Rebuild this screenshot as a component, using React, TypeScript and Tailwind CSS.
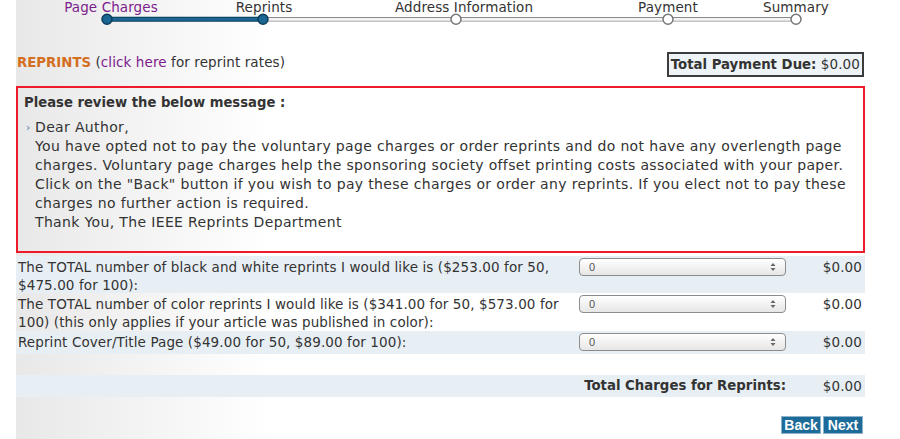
import React from "react";

const steps = [
  { label: "Page Charges", x: 111, node: 107, done: true },
  { label: "Reprints", x: 264, node: 263, done: true },
  { label: "Address Information", x: 464, node: 456, done: false },
  { label: "Payment", x: 668, node: 668, done: false },
  { label: "Summary", x: 796, node: 796, done: false },
];

const Stepper: React.FC = () => (
  <div className="relative h-[26px] w-[900px]">
    {steps.map((s) => (
      <span
        key={s.label}
        className={`absolute top-0 -translate-x-1/2 whitespace-nowrap leading-[14px] ${s.label === "Page Charges" ? "text-[#7d1d8c]" : "text-[#333]"}`}
        style={{ left: s.x }}
      >
        {s.label}
      </span>
    ))}
    <svg className="absolute left-0 top-0" width="900" height="26">
      <line x1="263" y1="17.5" x2="796" y2="17.5" stroke="#8a8a8a" strokeWidth="1" />
      <line x1="263" y1="21" x2="796" y2="21" stroke="#8a8a8a" strokeWidth="1" />
      <line x1="263" y1="19.25" x2="796" y2="19.25" stroke="#f4f4f4" strokeWidth="2.5" />
      <line x1="107" y1="19.25" x2="263" y2="19.25" stroke="#0b3d5a" strokeWidth="5" />
      <line x1="107" y1="19.25" x2="263" y2="19.25" stroke="#1a6793" strokeWidth="3" />
      {steps.map((s) =>
        s.done ? (
          <circle key={s.label} cx={s.node} cy="19.25" r="5" fill="#1a6793" stroke="#0b3d5a" strokeWidth="1.5" />
        ) : (
          <circle key={s.label} cx={s.node} cy="19.25" r="5" fill="#ffffff" stroke="#777" strokeWidth="1.5" />
        )
      )}
    </svg>
  </div>
);

const Select: React.FC = () => (
  <div className="flex h-[18px] w-[207px] shrink-0 items-center justify-between rounded-[4px] border border-[#8c8c8c] bg-[linear-gradient(to_bottom,#ffffff,#e6e6e6)] pl-[9px] pr-[9px] text-[11px] text-[#555] shadow-[inset_0_1px_0_#fff]">
    <span style={{ fontFamily: '"Liberation Sans", Arial, sans-serif' }}>0</span>
    <svg width="6" height="10" viewBox="0 0 6 10">
      <path d="M0.5 4 L3 1 L5.5 4 Z" fill="#666" />
      <path d="M0.5 6 L3 9 L5.5 6 Z" fill="#666" />
    </svg>
  </div>
);

const rows = [
  {
    label: "The TOTAL number of black and white reprints I would like is ($253.00 for 50, $475.00 for 100):",
    shade: true,
    cls: "h-[37px]",
  },
  {
    label: "The TOTAL number of color reprints I would like is ($341.00 for 50, $573.00 for 100) (this only applies if your article was published in color):",
    shade: false,
    cls: "h-[38px]",
  },
  {
    label: "Reprint Cover/Title Page ($49.00 for 50, $89.00 for 100):",
    shade: true,
    cls: "h-[23px]",
  },
];

export default function App() {
  return (
    <div
      className="min-h-[439px] w-[900px] bg-white text-[13.5px] tracking-[0.1px] text-[#333]"
      style={{ fontFamily: '"DejaVu Sans", Verdana, sans-serif' }}
    >
      <div className="ml-[16px] w-[849px] bg-[linear-gradient(to_right,#e8e8e8,#ffffff_30%)] pb-[6px]">
        <div className="-ml-[16px]">
          <Stepper />
        </div>

        <div className="mt-[26px] flex items-start justify-between">
          <div className="mt-[1px] pl-[1px] leading-[18px]">
            <span className="text-[13.3px] font-bold tracking-normal text-[#d46f1f]">REPRINTS</span>{" "}
            (<span className="text-[#7d1d8c]">click here</span> for reprint rates)
          </div>
          <div className="mr-[1px] h-[25px] whitespace-nowrap border-2 border-[#3c3c3c] bg-[#eef3f7] px-[2px] leading-[21px]">
            <span className="text-[13.3px] font-bold tracking-normal">Total Payment Due:</span> $0.00
          </div>
        </div>

        <div className="mt-[9px] h-[167px] border-2 border-[#ee1c2a] pl-[6px] pr-[10px] pt-[6px]">
          <div className="text-[13.2px] font-bold leading-[18px] tracking-normal">Please review the below message :</div>
          <div className="mt-[6px] flex text-[14px] leading-[19px] tracking-[0.35px]">
            <span className="w-[11px] shrink-0 pl-[2px] text-[11px] text-[#5a7fa0]">›</span>
            <div>
              Dear Author,
              <br />
              You have opted not to pay the voluntary page charges or order reprints and do not have any overlength page charges. Voluntary page charges help the sponsoring society offset printing costs associated with your paper. Click on the "Back" button if you wish to pay these charges or order any reprints. If you elect not to pay these charges no further action is required.
              <br />
              Thank You, The IEEE Reprints Department
            </div>
          </div>
        </div>

        <div className="mt-[3px]">
          {rows.map((r) => (
            <div key={r.label} className={`flex items-start pt-[2px] ${r.cls} ${r.shade ? "bg-[#e8eff4]" : ""}`}>
              <div className="w-[563px] pl-[2px] leading-[18px]">{r.label}</div>
              <Select />
              <div className="flex-1 pr-[3px] text-right leading-[18px]">$0.00</div>
            </div>
          ))}
          <div className="h-[21px]" />
          <div className="flex h-[22px] items-center bg-[#e8eff4]">
            <div className="w-[770px] text-right text-[13.3px] font-bold tracking-normal">Total Charges for Reprints:</div>
            <div className="flex-1 pr-[3px] text-right">$0.00</div>
          </div>
        </div>

        <div
          className="mt-[20px] flex justify-end gap-[4px] pr-[3px] text-[14px] font-bold tracking-normal text-white"
          style={{ fontFamily: '"Liberation Sans", Arial, sans-serif' }}
        >
          <span className="h-[16px] w-[38px] bg-[#1d6b98] text-center leading-[16px] outline outline-1 outline-[#8fb4cc]">Back</span>
          <span className="h-[16px] w-[38px] bg-[#1d6b98] text-center leading-[16px] outline outline-1 outline-[#8fb4cc]">Next</span>
        </div>
      </div>
    </div>
  );
}
